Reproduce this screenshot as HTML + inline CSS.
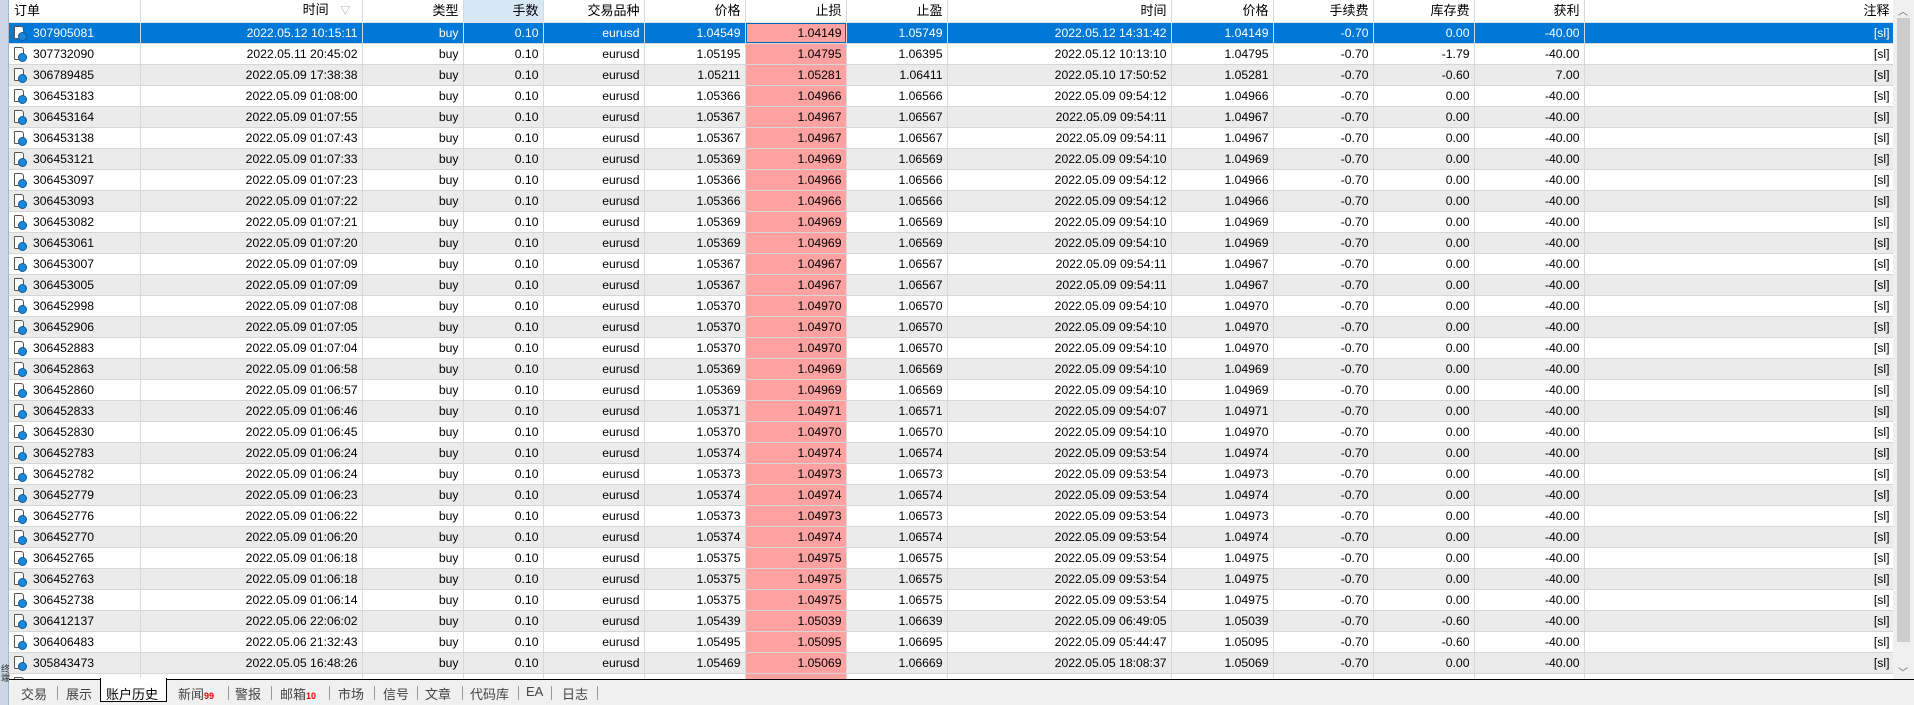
<!DOCTYPE html>
<html><head><meta charset="utf-8">
<style>
*{margin:0;padding:0;box-sizing:border-box}
body{width:1914px;height:705px;overflow:hidden;background:#fff;font-family:"Liberation Sans","Noto Sans CJK SC",sans-serif;font-size:12.2px;color:#000;position:relative}
#strip{position:absolute;left:0;top:0;width:9px;height:705px;background:#cdd8e6;border-right:1px solid #a9b6c6}
#strip span{position:absolute;left:0;top:664px;font-size:9px;writing-mode:vertical-rl;line-height:9px;color:#333}
#grid{position:absolute;left:9px;top:0;width:1884px;height:679px;overflow:hidden}
table{border-collapse:collapse;table-layout:fixed;width:1885px}
th,td{height:21px;padding:0 4px 0 0;text-align:right;white-space:nowrap;overflow:hidden;border-right:1px solid #d9d9d9;border-bottom:1px solid #d6d6d6;line-height:20px}
th{height:22px;font-weight:normal;background:#fff;border-bottom:1px solid #e6e6e6;font-size:13px}
th.l,td.l{text-align:left;padding-left:5px}
th.sel{background:#d9e8f7}
tr:nth-child(even) td{background:#ebebeb}
td.sl{background:#fea1a1 !important}
tr.s td{background:#0078d7 !important;color:#fff}
tr.s td.sl{background:#fea1a1 !important;color:#000;box-shadow:inset 0 0 0 1px #0066b8}
.ic{display:inline-block;width:10px;height:13px;border:1px solid #555;background:#fff;position:relative;vertical-align:-2px;margin-right:9px;border-radius:1px 3px 1px 1px}
.ic:after{content:"";position:absolute;right:-4px;bottom:-3px;width:7px;height:7px;border-radius:50%;background:#1e88d8;border:1px solid #0a5aa0}
#sb{position:absolute;left:1893px;top:0;width:21px;height:679px;background:#f0f0f0}
#thumb{position:absolute;left:4px;top:18px;width:13px;height:624px;background:#cdcdcd}
#sb .a{position:absolute;left:5px;font-size:10px;color:#606060}
#tabs{position:absolute;left:9px;top:679px;width:1905px;height:26px;background:#f0f0f0;border-top:1px solid #000}
#tabs span{position:absolute;top:4px;font-size:13px;color:#444}
#tabs i{position:absolute;top:6px;width:1px;height:14px;background:#999}
#tabs b{font-size:9px;color:#e00;font-weight:bold}
#act{position:absolute;left:91px;top:-2px;width:67px;height:24px;background:#fff;border:1px solid #000;border-top:none}
</style></head><body>
<div id="strip"><span>终端</span></div>
<div id="grid"><table>
<colgroup><col style="width:131px"><col style="width:222px"><col style="width:101px"><col style="width:80px"><col style="width:101px"><col style="width:101px"><col style="width:101px"><col style="width:101px"><col style="width:224px"><col style="width:102px"><col style="width:100px"><col style="width:101px"><col style="width:110px"><col style="width:310px"></colgroup>
<tr><th class="l">订单</th><th>时间 <span style="color:#999;font-size:10px;margin-left:8px">▽</span>&nbsp;&nbsp;</th><th>类型</th><th class="sel">手数</th><th>交易品种</th><th>价格</th><th>止损</th><th>止盈</th><th>时间</th><th>价格</th><th>手续费</th><th>库存费</th><th>获利</th><th>注释</th></tr>
<tr class="s"><td class="l"><span class="ic"></span>307905081</td><td>2022.05.12 10:15:11</td><td>buy</td><td>0.10</td><td>eurusd</td><td>1.04549</td><td class="sl">1.04149</td><td>1.05749</td><td>2022.05.12 14:31:42</td><td>1.04149</td><td>-0.70</td><td>0.00</td><td>-40.00</td><td>[sl]</td></tr>
<tr><td class="l"><span class="ic"></span>307732090</td><td>2022.05.11 20:45:02</td><td>buy</td><td>0.10</td><td>eurusd</td><td>1.05195</td><td class="sl">1.04795</td><td>1.06395</td><td>2022.05.12 10:13:10</td><td>1.04795</td><td>-0.70</td><td>-1.79</td><td>-40.00</td><td>[sl]</td></tr>
<tr><td class="l"><span class="ic"></span>306789485</td><td>2022.05.09 17:38:38</td><td>buy</td><td>0.10</td><td>eurusd</td><td>1.05211</td><td class="sl">1.05281</td><td>1.06411</td><td>2022.05.10 17:50:52</td><td>1.05281</td><td>-0.70</td><td>-0.60</td><td>7.00</td><td>[sl]</td></tr>
<tr><td class="l"><span class="ic"></span>306453183</td><td>2022.05.09 01:08:00</td><td>buy</td><td>0.10</td><td>eurusd</td><td>1.05366</td><td class="sl">1.04966</td><td>1.06566</td><td>2022.05.09 09:54:12</td><td>1.04966</td><td>-0.70</td><td>0.00</td><td>-40.00</td><td>[sl]</td></tr>
<tr><td class="l"><span class="ic"></span>306453164</td><td>2022.05.09 01:07:55</td><td>buy</td><td>0.10</td><td>eurusd</td><td>1.05367</td><td class="sl">1.04967</td><td>1.06567</td><td>2022.05.09 09:54:11</td><td>1.04967</td><td>-0.70</td><td>0.00</td><td>-40.00</td><td>[sl]</td></tr>
<tr><td class="l"><span class="ic"></span>306453138</td><td>2022.05.09 01:07:43</td><td>buy</td><td>0.10</td><td>eurusd</td><td>1.05367</td><td class="sl">1.04967</td><td>1.06567</td><td>2022.05.09 09:54:11</td><td>1.04967</td><td>-0.70</td><td>0.00</td><td>-40.00</td><td>[sl]</td></tr>
<tr><td class="l"><span class="ic"></span>306453121</td><td>2022.05.09 01:07:33</td><td>buy</td><td>0.10</td><td>eurusd</td><td>1.05369</td><td class="sl">1.04969</td><td>1.06569</td><td>2022.05.09 09:54:10</td><td>1.04969</td><td>-0.70</td><td>0.00</td><td>-40.00</td><td>[sl]</td></tr>
<tr><td class="l"><span class="ic"></span>306453097</td><td>2022.05.09 01:07:23</td><td>buy</td><td>0.10</td><td>eurusd</td><td>1.05366</td><td class="sl">1.04966</td><td>1.06566</td><td>2022.05.09 09:54:12</td><td>1.04966</td><td>-0.70</td><td>0.00</td><td>-40.00</td><td>[sl]</td></tr>
<tr><td class="l"><span class="ic"></span>306453093</td><td>2022.05.09 01:07:22</td><td>buy</td><td>0.10</td><td>eurusd</td><td>1.05366</td><td class="sl">1.04966</td><td>1.06566</td><td>2022.05.09 09:54:12</td><td>1.04966</td><td>-0.70</td><td>0.00</td><td>-40.00</td><td>[sl]</td></tr>
<tr><td class="l"><span class="ic"></span>306453082</td><td>2022.05.09 01:07:21</td><td>buy</td><td>0.10</td><td>eurusd</td><td>1.05369</td><td class="sl">1.04969</td><td>1.06569</td><td>2022.05.09 09:54:10</td><td>1.04969</td><td>-0.70</td><td>0.00</td><td>-40.00</td><td>[sl]</td></tr>
<tr><td class="l"><span class="ic"></span>306453061</td><td>2022.05.09 01:07:20</td><td>buy</td><td>0.10</td><td>eurusd</td><td>1.05369</td><td class="sl">1.04969</td><td>1.06569</td><td>2022.05.09 09:54:10</td><td>1.04969</td><td>-0.70</td><td>0.00</td><td>-40.00</td><td>[sl]</td></tr>
<tr><td class="l"><span class="ic"></span>306453007</td><td>2022.05.09 01:07:09</td><td>buy</td><td>0.10</td><td>eurusd</td><td>1.05367</td><td class="sl">1.04967</td><td>1.06567</td><td>2022.05.09 09:54:11</td><td>1.04967</td><td>-0.70</td><td>0.00</td><td>-40.00</td><td>[sl]</td></tr>
<tr><td class="l"><span class="ic"></span>306453005</td><td>2022.05.09 01:07:09</td><td>buy</td><td>0.10</td><td>eurusd</td><td>1.05367</td><td class="sl">1.04967</td><td>1.06567</td><td>2022.05.09 09:54:11</td><td>1.04967</td><td>-0.70</td><td>0.00</td><td>-40.00</td><td>[sl]</td></tr>
<tr><td class="l"><span class="ic"></span>306452998</td><td>2022.05.09 01:07:08</td><td>buy</td><td>0.10</td><td>eurusd</td><td>1.05370</td><td class="sl">1.04970</td><td>1.06570</td><td>2022.05.09 09:54:10</td><td>1.04970</td><td>-0.70</td><td>0.00</td><td>-40.00</td><td>[sl]</td></tr>
<tr><td class="l"><span class="ic"></span>306452906</td><td>2022.05.09 01:07:05</td><td>buy</td><td>0.10</td><td>eurusd</td><td>1.05370</td><td class="sl">1.04970</td><td>1.06570</td><td>2022.05.09 09:54:10</td><td>1.04970</td><td>-0.70</td><td>0.00</td><td>-40.00</td><td>[sl]</td></tr>
<tr><td class="l"><span class="ic"></span>306452883</td><td>2022.05.09 01:07:04</td><td>buy</td><td>0.10</td><td>eurusd</td><td>1.05370</td><td class="sl">1.04970</td><td>1.06570</td><td>2022.05.09 09:54:10</td><td>1.04970</td><td>-0.70</td><td>0.00</td><td>-40.00</td><td>[sl]</td></tr>
<tr><td class="l"><span class="ic"></span>306452863</td><td>2022.05.09 01:06:58</td><td>buy</td><td>0.10</td><td>eurusd</td><td>1.05369</td><td class="sl">1.04969</td><td>1.06569</td><td>2022.05.09 09:54:10</td><td>1.04969</td><td>-0.70</td><td>0.00</td><td>-40.00</td><td>[sl]</td></tr>
<tr><td class="l"><span class="ic"></span>306452860</td><td>2022.05.09 01:06:57</td><td>buy</td><td>0.10</td><td>eurusd</td><td>1.05369</td><td class="sl">1.04969</td><td>1.06569</td><td>2022.05.09 09:54:10</td><td>1.04969</td><td>-0.70</td><td>0.00</td><td>-40.00</td><td>[sl]</td></tr>
<tr><td class="l"><span class="ic"></span>306452833</td><td>2022.05.09 01:06:46</td><td>buy</td><td>0.10</td><td>eurusd</td><td>1.05371</td><td class="sl">1.04971</td><td>1.06571</td><td>2022.05.09 09:54:07</td><td>1.04971</td><td>-0.70</td><td>0.00</td><td>-40.00</td><td>[sl]</td></tr>
<tr><td class="l"><span class="ic"></span>306452830</td><td>2022.05.09 01:06:45</td><td>buy</td><td>0.10</td><td>eurusd</td><td>1.05370</td><td class="sl">1.04970</td><td>1.06570</td><td>2022.05.09 09:54:10</td><td>1.04970</td><td>-0.70</td><td>0.00</td><td>-40.00</td><td>[sl]</td></tr>
<tr><td class="l"><span class="ic"></span>306452783</td><td>2022.05.09 01:06:24</td><td>buy</td><td>0.10</td><td>eurusd</td><td>1.05374</td><td class="sl">1.04974</td><td>1.06574</td><td>2022.05.09 09:53:54</td><td>1.04974</td><td>-0.70</td><td>0.00</td><td>-40.00</td><td>[sl]</td></tr>
<tr><td class="l"><span class="ic"></span>306452782</td><td>2022.05.09 01:06:24</td><td>buy</td><td>0.10</td><td>eurusd</td><td>1.05373</td><td class="sl">1.04973</td><td>1.06573</td><td>2022.05.09 09:53:54</td><td>1.04973</td><td>-0.70</td><td>0.00</td><td>-40.00</td><td>[sl]</td></tr>
<tr><td class="l"><span class="ic"></span>306452779</td><td>2022.05.09 01:06:23</td><td>buy</td><td>0.10</td><td>eurusd</td><td>1.05374</td><td class="sl">1.04974</td><td>1.06574</td><td>2022.05.09 09:53:54</td><td>1.04974</td><td>-0.70</td><td>0.00</td><td>-40.00</td><td>[sl]</td></tr>
<tr><td class="l"><span class="ic"></span>306452776</td><td>2022.05.09 01:06:22</td><td>buy</td><td>0.10</td><td>eurusd</td><td>1.05373</td><td class="sl">1.04973</td><td>1.06573</td><td>2022.05.09 09:53:54</td><td>1.04973</td><td>-0.70</td><td>0.00</td><td>-40.00</td><td>[sl]</td></tr>
<tr><td class="l"><span class="ic"></span>306452770</td><td>2022.05.09 01:06:20</td><td>buy</td><td>0.10</td><td>eurusd</td><td>1.05374</td><td class="sl">1.04974</td><td>1.06574</td><td>2022.05.09 09:53:54</td><td>1.04974</td><td>-0.70</td><td>0.00</td><td>-40.00</td><td>[sl]</td></tr>
<tr><td class="l"><span class="ic"></span>306452765</td><td>2022.05.09 01:06:18</td><td>buy</td><td>0.10</td><td>eurusd</td><td>1.05375</td><td class="sl">1.04975</td><td>1.06575</td><td>2022.05.09 09:53:54</td><td>1.04975</td><td>-0.70</td><td>0.00</td><td>-40.00</td><td>[sl]</td></tr>
<tr><td class="l"><span class="ic"></span>306452763</td><td>2022.05.09 01:06:18</td><td>buy</td><td>0.10</td><td>eurusd</td><td>1.05375</td><td class="sl">1.04975</td><td>1.06575</td><td>2022.05.09 09:53:54</td><td>1.04975</td><td>-0.70</td><td>0.00</td><td>-40.00</td><td>[sl]</td></tr>
<tr><td class="l"><span class="ic"></span>306452738</td><td>2022.05.09 01:06:14</td><td>buy</td><td>0.10</td><td>eurusd</td><td>1.05375</td><td class="sl">1.04975</td><td>1.06575</td><td>2022.05.09 09:53:54</td><td>1.04975</td><td>-0.70</td><td>0.00</td><td>-40.00</td><td>[sl]</td></tr>
<tr><td class="l"><span class="ic"></span>306412137</td><td>2022.05.06 22:06:02</td><td>buy</td><td>0.10</td><td>eurusd</td><td>1.05439</td><td class="sl">1.05039</td><td>1.06639</td><td>2022.05.09 06:49:05</td><td>1.05039</td><td>-0.70</td><td>-0.60</td><td>-40.00</td><td>[sl]</td></tr>
<tr><td class="l"><span class="ic"></span>306406483</td><td>2022.05.06 21:32:43</td><td>buy</td><td>0.10</td><td>eurusd</td><td>1.05495</td><td class="sl">1.05095</td><td>1.06695</td><td>2022.05.09 05:44:47</td><td>1.05095</td><td>-0.70</td><td>-0.60</td><td>-40.00</td><td>[sl]</td></tr>
<tr><td class="l"><span class="ic"></span>305843473</td><td>2022.05.05 16:48:26</td><td>buy</td><td>0.10</td><td>eurusd</td><td>1.05469</td><td class="sl">1.05069</td><td>1.06669</td><td>2022.05.05 18:08:37</td><td>1.05069</td><td>-0.70</td><td>0.00</td><td>-40.00</td><td>[sl]</td></tr>
<tr><td class="l"><span class="ic"></span>305843470</td><td>2022.05.05 16:48:20</td><td>buy</td><td>0.10</td><td>eurusd</td><td>1.05469</td><td class="sl">1.05069</td><td>1.06669</td><td>2022.05.05 18:08:37</td><td>1.05069</td><td>-0.70</td><td>0.00</td><td>-40.00</td><td>[sl]</td></tr>
</table></div>
<div id="sb"><span class="a" style="top:3px">︿</span><div id="thumb"></div><span class="a" style="top:664px">﹀</span></div>
<div id="tabs">
<div id="act"></div>
<span style="left:12px">交易</span><i style="left:48px"></i>
<span style="left:57px">展示</span>
<span style="left:97px;color:#000">账户历史</span>
<span style="left:169px">新闻<b>99</b></span><i style="left:219px"></i>
<span style="left:226px">警报</span><i style="left:262px"></i>
<span style="left:271px">邮箱<b>10</b></span><i style="left:320px"></i>
<span style="left:329px">市场</span><i style="left:365px"></i>
<span style="left:374px">信号</span><i style="left:408px"></i>
<span style="left:416px">文章</span><i style="left:453px"></i>
<span style="left:461px">代码库</span><i style="left:509px"></i>
<span style="left:517px">EA</span><i style="left:542px"></i>
<span style="left:553px">日志</span><i style="left:588px"></i>
</div>
</body></html>
